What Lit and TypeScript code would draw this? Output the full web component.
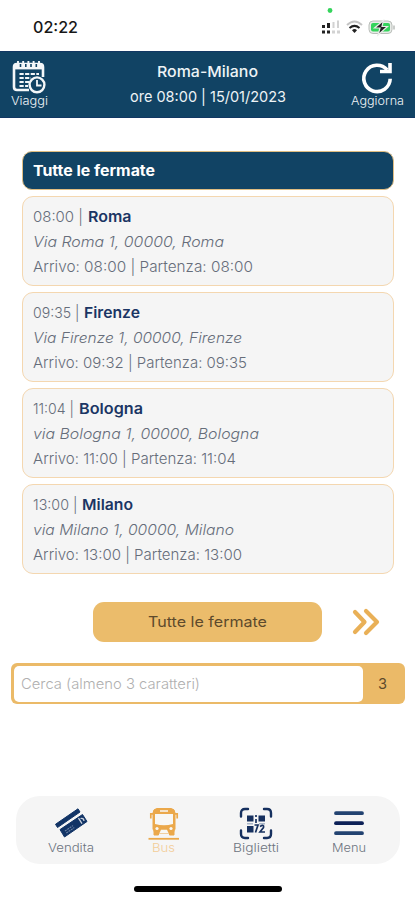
import { LitElement, html, css } from "lit";
import { customElement, property } from "lit/decorators.js";

@customElement("text-line")
class TextLine extends LitElement {
  @property() text = "";
  @property({ type: Number }) w = 100;
  @property({ type: Number }) size = 15;
  @property({ type: Number }) weight = 400;
  @property({ type: Boolean }) slanted = false;

  static styles = css`
    :host { display: block; flex: none; height: 20px; }
    svg { display: block; overflow: visible; height: 20px; fill: currentColor; }
    text { font-family: Inter, "Liberation Sans", sans-serif; }
    .slanted { font-style: italic; }
  `;

  render() {
    return html`<svg width=${this.w} height="20">
      <text class=${this.slanted ? "slanted" : ""} x="0" y="15" font-size=${this.size}
        font-weight=${this.weight} textLength=${this.w} lengthAdjust="spacingAndGlyphs">${this.text}</text>
    </svg>`;
  }
}

const line = (text: string, w: number, size = 15, weight = 350, slanted = false) =>
  html`<text-line .text=${text} .w=${w} .size=${size} .weight=${weight} .slanted=${slanted}></text-line>`;

const stops = [
  { time: "08:00 |", tw: 50, city: "Roma", cw: 43.5, street: "Via Roma 1, 00000, Roma", sw: 191, hours: "Arrivo: 08:00 | Partenza: 08:00", hw: 220 },
  { time: "09:35 |", tw: 46.5, city: "Firenze", cw: 56, street: "Via Firenze 1, 00000, Firenze", sw: 209, hours: "Arrivo: 09:32 | Partenza: 09:35", hw: 214 },
  { time: "11:04 |", tw: 41, city: "Bologna", cw: 64, street: "via Bologna 1, 00000, Bologna", sw: 226, hours: "Arrivo: 11:00 | Partenza: 11:04", hw: 203 },
  { time: "13:00 |", tw: 44.5, city: "Milano", cw: 51, street: "via Milano 1, 00000, Milano", sw: 201, hours: "Arrivo: 13:00 | Partenza: 13:00", hw: 209 },
];

const calendarIcon = html`<svg width="36" height="36" viewBox="0 0 36 36" fill="none" stroke="#f4f7f9">
  <path d="M32 17V7Q32 4 29 4H6Q3 4 3 7V27Q3 30 6 30H18" stroke-width="2.6"/>
  <path d="M3 6.6H32" stroke-width="5.6"/>
  <path d="M9.5 4V7M14.8 4V7M20 4V7M25.3 4V7" stroke="#114364" stroke-width="1.6"/>
  <path d="M7 1V6M12.2 1V6M17.4 1V6M22.6 1V6M28 1V6" stroke-width="1.9"/>
  <path d="M8.5 14H28M8.5 18H20M8.5 22H18M8.5 26H17" stroke-width="2.2" stroke-dasharray="4.2 1.4"/>
  <circle cx="26" cy="24.8" r="7.4" stroke-width="2.4" fill="#114364"/>
  <path d="M26 20V25.5H30.5" stroke-width="1.8"/>
</svg>`;

const refreshIcon = html`<svg width="36" height="36" viewBox="0 0 36 36" fill="none" stroke="#fff">
  <path d="M27.2 10A13.2 13.2 0 1 0 30.2 18.8" stroke-width="3.6"/>
  <path d="M30 3V11.5H20" stroke-width="3.6"/>
</svg>`;

const ticketIcon = html`<svg width="34" height="34" viewBox="0 0 34 34">
  <path d="M1.5 17.3L24 1.8L26 5L3.5 20.5Z" fill="#123466" stroke="#123466" stroke-linejoin="round"/>
  <path d="M6 22.6L28.5 7.5L33 14.5L10.5 30Z" fill="#123466" stroke="#123466" stroke-linejoin="round"/>
  <path d="M11 24L19 18.6M12.3 26L20.3 20.6" stroke="#6d82a4" stroke-width="1.1" stroke-dasharray="2 .8"/>
  <path d="M24.5 11.2L28 16.6M26.5 11.5Q29.5 10.5 30 14" fill="none" stroke="#c9d1dd" stroke-width="1.3"/>
</svg>`;

const busIcon = html`<svg width="34" height="34" viewBox="0 0 34 34" fill="none" stroke="#eba84a">
  <path d="M6 22V6Q6 2 10 1.5H24Q28 2 28 6V22L26 26H8Z" fill="#eba84a" stroke-width="1"/>
  <path d="M8 7H26V17Q17 19.5 8 17Z" fill="#f8f7f4" stroke="none"/>
  <path d="M13 4H21" stroke="#f8f7f4" stroke-width="1.5"/>
  <path d="M6 6.8H3.8V11.5M28 6.8H30.2V11.5" stroke-width="1.7"/>
  <path d="M7 24V28H11.5V25M22.5 25V28H27V24" fill="#eba84a"/>
  <circle cx="10" cy="21.5" r="1.6" fill="#f8f7f4" stroke="none"/>
  <circle cx="24" cy="21.5" r="1.6" fill="#f8f7f4" stroke="none"/>
  <path d="M12.5 26L14 22.8H20L21.5 26Z" fill="#f8f7f4" stroke="none"/>
  <path d="M1.5 31.8H32" stroke-width="1.8"/>
</svg>`;

const scanIcon = html`<svg width="34" height="34" viewBox="0 0 34 34" fill="none" stroke="#16305f">
  <path d="M2 9.5V6Q2 2 6 2H9M25 2H28Q32 2 32 6V9.5M32 23.5V27Q32 31 28 31H25M9 31H6Q2 31 2 27V23.5" stroke-width="2.4" stroke-linecap="round"/>
  <path d="M8 8.5H14.5V14.5H8ZM19.5 8.5H26V14.5H19.5ZM8 19H14.5V25.5H8Z" fill="#16305f" stroke="none"/>
  <path d="M8 16.7H14M20 16.7H26" stroke="#a9b6c8" stroke-width="1.6"/>
  <path d="M17 8V10M17 12V16M15.5 18H19L16.5 25.5M21 19.5Q25.5 17 24.5 20.5L21 25H26" stroke-width="1.7"/>
</svg>`;

const menuIcon = html`<svg width="34" height="34" viewBox="0 0 34 34" fill="none" stroke-linecap="round" stroke-width="3.8">
  <path d="M4 6.2H30M4 26.2H30" stroke="#234371"/><path d="M4 16.2H30" stroke="#0d2157"/>
</svg>`;

const tabs = [
  { label: "Vendita", w: 46, icon: ticketIcon, active: false },
  { label: "Bus", w: 23, icon: busIcon, active: true },
  { label: "Biglietti", w: 46, icon: scanIcon, active: false },
  { label: "Menu", w: 34, icon: menuIcon, active: false },
];

@customElement("app-root")
class AppRoot extends LitElement {
  static styles = css`
    :host { display: flex; flex-direction: column; height: 900px; background: #fff; overflow: hidden; box-sizing: border-box; }
    * { box-sizing: border-box; }
    svg { display: block; flex: none; }
    .status { height: 51px; flex: none; display: flex; justify-content: space-between; padding: 18px 19px 0 33px; color: #171717; }
    .signals { margin-top: -12px; }
    header { height: 67px; flex: none; background: #114364; color: #eef3f6; border-top: 1px solid #123763; border-bottom: 1px solid #123763; display: flex; justify-content: space-between; padding: 0 11px; }
    .action { width: 53px; display: flex; flex-direction: column; padding-top: 8px; }
    .action.left { align-items: flex-start; }
    .action.right { align-items: center; }
    .action text-line { margin-top: -6px; }
    .trip { display: flex; flex-direction: column; align-items: center; gap: 5px; padding-top: 10px; }
    main { padding: 33px 21px 0 22px; display: flex; flex-direction: column; flex: none; }
    .title { height: 39px; background: #114364; border: 1px solid #dfbd82; border-radius: 10px; color: #fff; padding: 9px 0 0 9.5px; margin-bottom: 6px; }
    .stop { height: 90px; margin-bottom: 6px; background: #f5f5f5; border: 1.5px solid #f4d7b0; border-radius: 11px; padding: 10px 0 0 9.5px; display: flex; flex-direction: column; gap: 5px; color: #666d7a; }
    .head { display: flex; gap: 5px; }
    .city { color: #1b3564; }
    .pager { display: flex; align-items: center; height: 40px; margin: 22px 35px 0 93px; justify-content: space-between; flex: none; }
    .button { width: 229px; height: 40px; border-radius: 11px; background: #ebbc6b; color: #5d4a2c; display: flex; justify-content: center; padding-top: 10px; }
    .search { display: flex; flex: none; margin: 21px 10px 0 11px; height: 41px; background: #ebba68; border-radius: 6px; padding: 2.5px; }
    .field { width: 349px; background: #fff; border-radius: 5px; color: #b0b0b0; padding: 8.5px 0 0 7.5px; }
    .count { flex: 1; display: flex; justify-content: center; padding-top: 8.5px; color: #5d4a2c; }
    nav { margin: 92px 15px 0 16px; height: 68px; flex: none; border-radius: 24px; background: #f5f5f5; display: flex; justify-content: space-between; padding: 11px 20px 0 24px; color: #6d7480; }
    .tab { width: 62px; display: flex; flex-direction: column; align-items: center; }
    .tab text-line { margin-top: -4px; }
    .active { color: #f3cd98; }
    .home { width: 148px; height: 6px; border-radius: 3px; background: #000; margin: 22px 0 0 134px; flex: none; }
  `;

  render() {
    return html`
      <div class="status">
        ${line("02:22", 45, 16, 500)}
        <svg class="signals" width="76" height="34" viewBox="0 0 76 34">
          <circle cx="10" cy="4.5" r="2.4" fill="#35d45c"/>
          <g fill="#222"><rect x="2" y="19" width="3" height="3"/><rect x="7" y="17" width="3" height="5"/><rect x="2" y="24.5" width="3" height="3"/><rect x="7" y="24.5" width="3" height="3"/></g>
          <g fill="#d2d2d2"><rect x="12.5" y="16" width="2" height="6"/><rect x="17" y="14.5" width="2" height="7.5"/><rect x="12" y="24.5" width="3" height="3"/><rect x="17" y="24.5" width="3" height="3"/></g>
          <g fill="none" stroke-width="2"><path d="M27 19Q34.5 12 42 19" stroke="#c4c4c4"/><path d="M29.5 22Q34.5 17.8 39.5 22" stroke="#222"/></g>
          <path d="M32 24.2Q34.5 22 37 24.2L34.5 27Z" fill="#222"/>
          <rect x="49" y="15" width="23" height="12.5" rx="4" fill="#e8ece8" stroke="#b9bdb9"/>
          <rect x="51" y="17" width="19" height="8.5" rx="2" fill="#35d45c"/>
          <path d="M63.5 14.5L54.5 22H60L58 29L67.5 20.5H62Z" fill="#222" stroke="#e8ece8" stroke-width="1.2"/>
          <path d="M74 19.5V23.5" stroke="#b9bdb9" stroke-width="1.5"/>
        </svg>
      </div>
      <header>
        <div class="action left">${calendarIcon}${line("Viaggi", 37, 12)}</div>
        <div class="trip">${line("Roma-Milano", 101, 15, 500)}${line("ore 08:00 | 15/01/2023", 156, 15, 400)}</div>
        <div class="action right">${refreshIcon}${line("Aggiorna", 53, 12)}</div>
      </header>
      <main>
        <div class="title">${line("Tutte le fermate", 122, 15, 650)}</div>
        ${stops.map((s) => html`<section class="stop">
          <div class="head">${line(s.time, s.tw)}<span class="city">${line(s.city, s.cw, 15, 620)}</span></div>
          ${line(s.street, s.sw, 14.5, 350, true)}
          ${line(s.hours, s.hw)}
        </section>`)}
      </main>
      <div class="pager">
        <div class="button">${line("Tutte le fermate", 119, 14.5, 420)}</div>
        <svg width="28" height="28" viewBox="0 0 28 28" fill="none" stroke="#e9b057" stroke-width="4.2" stroke-linecap="round" stroke-linejoin="round">
          <path d="M3 4L12.5 14L3 24M14 3L25 14L14 25"/>
        </svg>
      </div>
      <div class="search">
        <div class="field">${line("Cerca (almeno 3 caratteri)", 179, 14.5)}</div>
        <div class="count">${line("3", 9, 15, 400)}</div>
      </div>
      <nav>
        ${tabs.map((t) => html`<div class="tab ${t.active ? "active" : ""}">${t.icon}${line(t.label, t.w, 12)}</div>`)}
      </nav>
      <div class="home"></div>
    `;
  }
}
